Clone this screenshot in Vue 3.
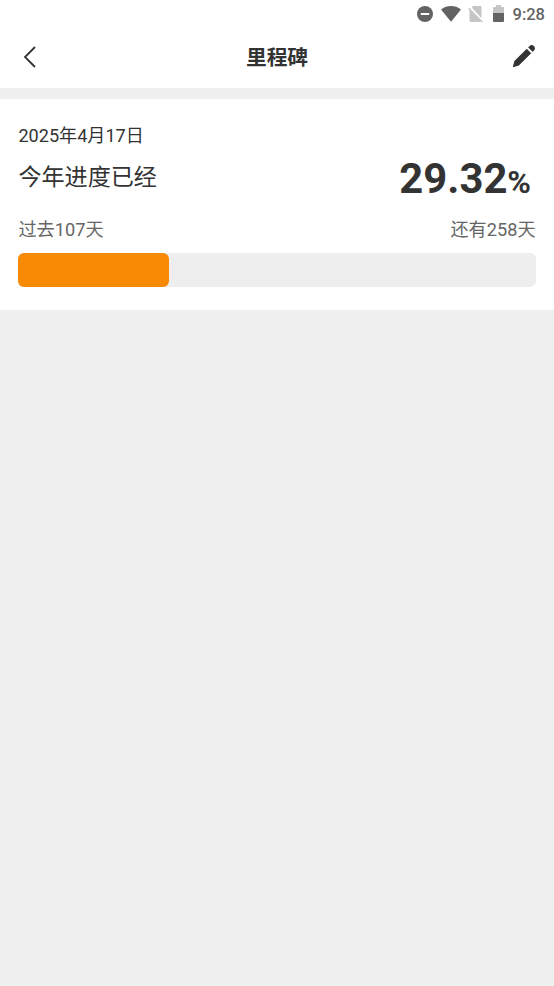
<script setup>
import { computed } from 'vue'

const passed = 107
const remaining = 258
const progress = computed(() => ((passed - 1) / (passed + remaining - 1)) * 100)
const percent = computed(() => ((passed / (passed + remaining)) * 100).toFixed(2))
</script>

<template>
  <div class="screen">
    <header class="top">
      <div class="status">
        <svg class="dnd" width="16" height="16" viewBox="0 0 16 16">
          <circle cx="8" cy="8" r="8" fill="#636363" />
          <rect x="3.8" y="7" width="8.4" height="2" fill="#fff" />
        </svg>
        <svg class="wifi" width="20" height="16" viewBox="0 0 20 16">
          <path d="M0 3.4C5.8-1.1 14.2-1.1 20 3.4L10 15.8Z" fill="#636363" />
        </svg>
        <svg class="sim" width="15" height="17" viewBox="0 0 15 17">
          <path d="M5.2 0H12.5Q13.5 0 13.5 1V12.2L3.7 1.5ZM1.5 3.2L13 15.6Q12.8 16 12.4 16H2.5Q1.5 16 1.5 15Z" fill="#c5c5c5" />
          <path d="M.7 2.2L14.2 16" stroke="#c5c5c5" stroke-width="1.5" />
        </svg>
        <svg class="battery" width="11" height="17" viewBox="0 0 11 17">
          <path d="M3 0H8V2H10Q11 2 11 3V9H0V3Q0 2 1 2H3Z" fill="#c5c5c5" />
          <path d="M0 8H11V16Q11 17 10 17H1Q0 17 0 16Z" fill="#636363" />
        </svg>
        <span class="clock">9:28</span>
      </div>
      <nav class="nav">
        <svg class="back" width="14" height="24" viewBox="0 0 14 24">
          <path d="M12 2L2 12L12 22" fill="none" stroke="#333" stroke-width="1.8" />
        </svg>
        <h1 class="title">里程碑</h1>
        <svg class="edit" width="24" height="24" viewBox="0 0 24 24">
          <path d="M.8 23.2L2.4 17.1L14.8 4.8L19.2 9.2L6.9 21.5Z" fill="#333" />
          <path d="M16.2 3.4L17.8 1.8C20.4-.6 24.6 3.6 22.2 6.2L20.6 7.8Z" fill="#333" />
        </svg>
      </nav>
    </header>
    <main class="card">
      <div class="date">2025年4月17日</div>
      <div class="summary">
        <span class="label">今年进度已经</span>
        <span class="value">{{ percent }}<small>%</small></span>
      </div>
      <div class="days">
        <span>过去{{ passed }}天</span>
        <span>还有{{ remaining }}天</span>
      </div>
      <div class="track">
        <div class="fill" :style="{ width: progress + '%' }"></div>
      </div>
    </main>
  </div>
</template>

<style>
body {
  background: #f0f0f0;
}
</style>

<style scoped>
.screen {
  min-height: 986px;
  background: #f0f0f0;
  color: #333;
  font-family: Roboto, "Noto Sans CJK SC", sans-serif;
}
.top {
  height: 88px;
  background: #fff;
}
.status {
  display: flex;
  align-items: center;
  justify-content: flex-end;
  height: 28px;
  padding-right: 9px;
}
.wifi {
  margin-left: 8px;
}
.sim {
  margin-left: 7px;
}
.battery {
  margin: -2px 9px 0 10px;
}
.clock {
  padding-top: 2px;
  font-size: 16.5px;
  line-height: 26px;
  font-weight: 500;
  color: #636363;
}
.nav {
  display: flex;
  align-items: center;
  justify-content: space-between;
  height: 58px;
  padding: 0 18px 0 23px;
}
.title {
  margin: 0;
  padding: 2px 0 0 5px;
  font-size: 20.7px;
  line-height: 30px;
  font-weight: 700;
}
.edit {
  margin-top: -3px;
}
.card {
  box-sizing: border-box;
  height: 211px;
  margin-top: 11px;
  padding: 24px 18.4px 0;
  background: #fff;
}
.date {
  font-size: 18.1px;
  line-height: 26px;
}
.summary {
  display: flex;
  justify-content: space-between;
  height: 65px;
  padding-right: 4.6px;
}
.label {
  font-size: 23.1px;
  line-height: 57px;
}
.value {
  font-size: 41.8px;
  line-height: 60px;
  font-weight: 700;
}
.value small {
  font-size: 32px;
}
.days {
  display: flex;
  justify-content: space-between;
  font-size: 18.2px;
  line-height: 32px;
  color: #666;
}
.track {
  height: 34.4px;
  margin-top: 6.6px;
  border-radius: 6px;
  background: #eee;
}
.fill {
  height: 100%;
  border-radius: 6px;
  background: #f88a06;
}
</style>
